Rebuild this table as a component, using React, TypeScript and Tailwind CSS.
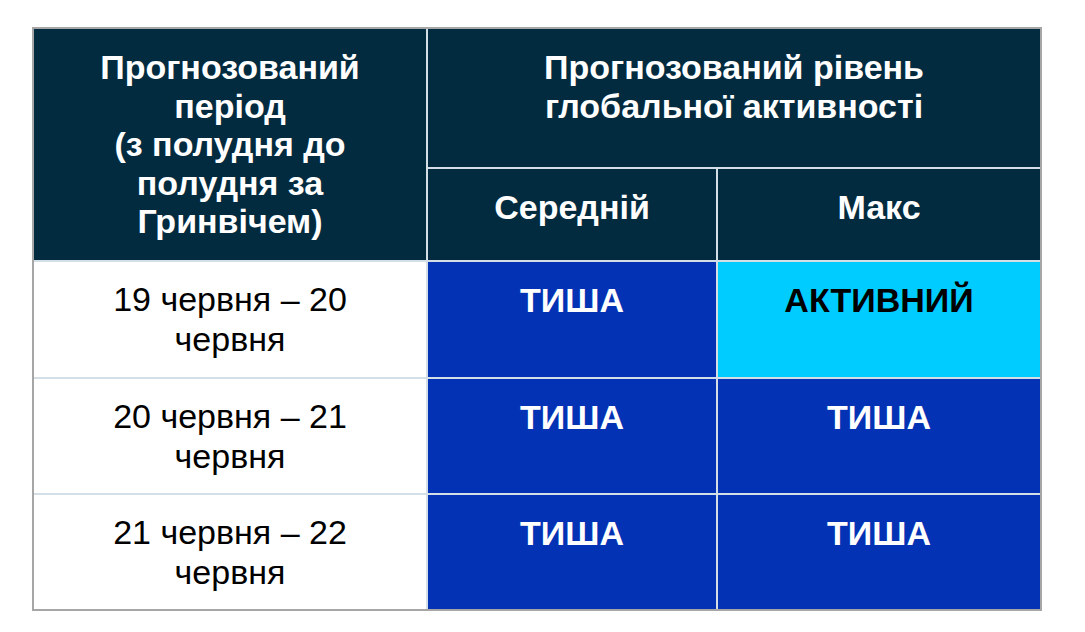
const rows = [
  { period: ['19 червня – 20', 'червня'], avg: 'ТИША', max: 'АКТИВНИЙ' },
  { period: ['20 червня – 21', 'червня'], avg: 'ТИША', max: 'ТИША' },
  { period: ['21 червня – 22', 'червня'], avg: 'ТИША', max: 'ТИША' },
];

const head = 'bg-[#032b40] text-white font-bold text-center pt-[19px] px-3';

function Level({ value }: { value: string }) {
  const active = value === 'АКТИВНИЙ';
  return (
    <div
      className={
        active
          ? 'bg-[#00ccff] text-black font-bold text-center pt-[19px]'
          : 'bg-[#0432b4] text-white font-bold text-center pt-[19px]'
      }
    >
      {value}
    </div>
  );
}

export default function App() {
  return (
    <div className="w-[1085px] h-[632px] bg-white pt-[27px] pl-[32px]" style={{ fontFamily: '"Liberation Sans", Arial, sans-serif' }}>
      <div className="inline-grid grid-cols-[392px_288px_322px] grid-rows-[138px_91px_115px_114px_114px] gap-[2px] bg-[#d3dee6] border-2 border-[#a6a6a6] text-[34px] leading-[38.5px]">
        <div className={`${head} row-span-2`}>
          Прогнозований
          <br />
          період
          <br />
          (з полудня до
          <br />
          полудня за
          <br />
          Гринвічем)
        </div>
        <div className={`${head} col-span-2`}>
          Прогнозований рівень
          <br />
          глобальної активності
        </div>
        <div className={head}>Середній</div>
        <div className={head}>Макс</div>

        {rows.map((r, i) => (
          <div key={i} className="contents">
            <div className="bg-white text-black text-center pt-[18px] leading-[39.5px]">
              {r.period[0]}
              <br />
              {r.period[1]}
            </div>
            <Level value={r.avg} />
            <Level value={r.max} />
          </div>
        ))}
      </div>
    </div>
  );
}
